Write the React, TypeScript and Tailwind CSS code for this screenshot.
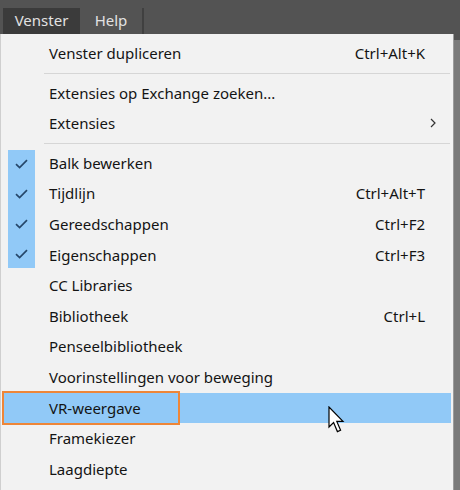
import { Fragment } from 'react';

type Item = {
  label?: string;
  shortcut?: string;
  checked?: boolean;
  submenu?: boolean;
  active?: boolean;
  separator?: boolean;
};

const ITEMS: Item[] = [
  { label: 'Venster dupliceren', shortcut: 'Ctrl+Alt+K' },
  { separator: true },
  { label: 'Extensies op Exchange zoeken...' },
  { label: 'Extensies', submenu: true },
  { separator: true },
  { label: 'Balk bewerken', checked: true },
  { label: 'Tijdlijn', shortcut: 'Ctrl+Alt+T', checked: true },
  { label: 'Gereedschappen', shortcut: 'Ctrl+F2', checked: true },
  { label: 'Eigenschappen', shortcut: 'Ctrl+F3', checked: true },
  { label: 'CC Libraries' },
  { label: 'Bibliotheek', shortcut: 'Ctrl+L' },
  { label: 'Penseelbibliotheek' },
  { label: 'Voorinstellingen voor beweging' },
  { label: 'VR-weergave', active: true },
  { label: 'Framekiezer' },
  { label: 'Laagdiepte' },
];

const Check = () => (
  <svg width="13" height="10" viewBox="0 0 13 10" fill="none">
    <path d="M1 5.2 L4.6 8.6 L12 1.2" stroke="#26476a" strokeWidth="1.7" />
  </svg>
);

const Cursor = () => (
  <svg width="20" height="28" viewBox="0 0 20 28">
    <path
      d="M1 1 L1 21 L5.6 16.6 L9.4 25.6 L12.6 24.2 L8.8 15.4 L15 15.4 Z"
      fill="#ffffff"
      stroke="#000000"
      strokeWidth="1.2"
    />
  </svg>
);

const MenuRow = ({ item, index }: { item: Item; index: number }) => {
  const prevChecked = ITEMS[index - 1]?.checked;
  const nextChecked = ITEMS[index + 1]?.checked;
  return (
    <div
      className={`relative flex h-[30.6px] items-center ${
        item.active ? 'mr-[2px] ml-[3px] bg-[#91c9f7]' : 'mx-[3px]'
      }`}
    >
      <div className="flex h-full w-[40px] items-center pl-[4px]">
        {item.checked && (
          <div
            className={`flex w-[27px] items-center justify-center self-stretch bg-[#91c9f7] ${
              !prevChecked ? 'mt-[2px]' : ''
            } ${!nextChecked ? 'mb-[2px]' : ''}`}
          >
            <Check />
          </div>
        )}
      </div>
      <span className="ml-[5px] flex-1 text-[#141414]">{item.label}</span>
      {item.shortcut && <span className="mr-[25px] text-[#141414]">{item.shortcut}</span>}
      {item.submenu && (
        <svg className="mr-[14px]" width="6" height="10" viewBox="0 0 6 10" fill="none">
          <path d="M1 1 L5 5 L1 9" stroke="#333" strokeWidth="1.2" />
        </svg>
      )}
      {item.active && (
        <>
          <div className="absolute top-[-2px] left-[-2px] h-[34px] w-[178px] border-[2.5px] border-[#ee8638]" />
          <div className="absolute top-[13px] left-[324px]">
            <Cursor />
          </div>
        </>
      )}
    </div>
  );
};

export default function App() {
  return (
    <div
      className="flex h-[490px] w-[460px] flex-col overflow-hidden bg-[#535353] text-[15px]"
      style={{ fontFamily: '"Noto Sans", "Open Sans", Arial, sans-serif' }}
    >
      {/* top menubar */}
      <div className="flex h-[34px] shrink-0 items-end pl-[3px]">
        <div className="flex h-[26px] w-[77px] items-center justify-center bg-[#3b3b3b] pb-[1px] text-[#e2e2e2]">
          Venster
        </div>
        <div className="flex h-[26px] w-[62px] items-center justify-center pb-[1px] text-[#e2e2e2]">
          Help
        </div>
        <div className="h-[26px] w-[2px] bg-[#404040]" />
      </div>

      <div className="flex flex-1">
        <div className="flex w-[454px] flex-col border-l border-r border-l-[#cfcfcf] border-r-[#9c9c9c] bg-[#f2f2f2] pt-[4px]">
          {ITEMS.map((item, i) => (
            <Fragment key={i}>
              {item.separator ? (
                <div className="flex h-[9px] items-center pl-[43px] pr-[3px]">
                  <div className="h-px w-full bg-[#d6d6d6]" />
                </div>
              ) : (
                <MenuRow item={item} index={i} />
              )}
            </Fragment>
          ))}
        </div>
        <div className="flex w-[6px] flex-col">
          <div className="h-[6px] bg-[#535353]" />
          <div className="flex-1 bg-[#7a7a7a]" />
        </div>
      </div>
    </div>
  );
}
